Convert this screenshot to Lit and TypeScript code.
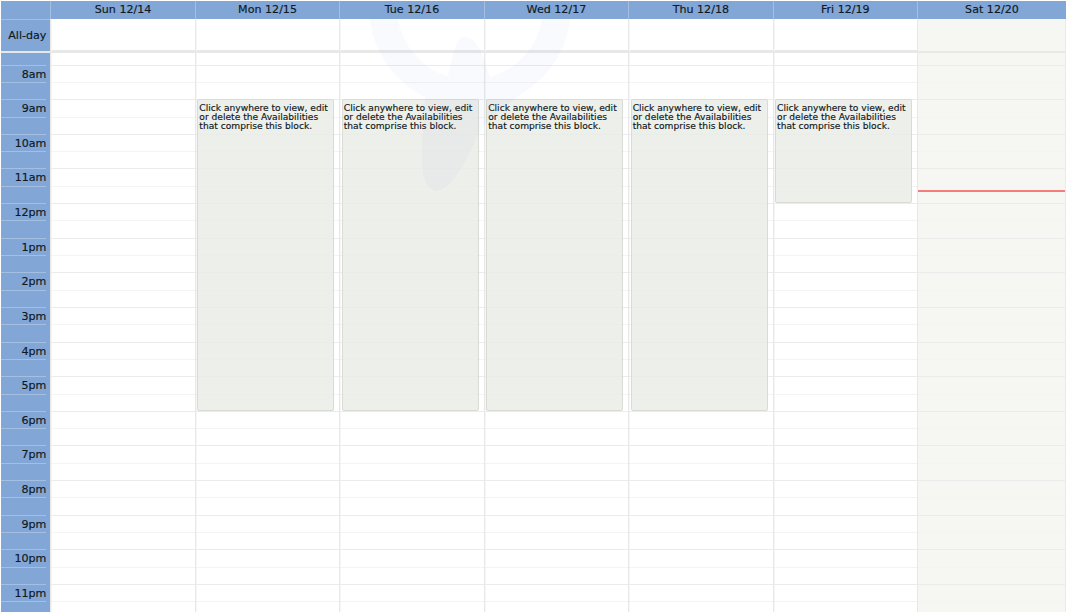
import { LitElement, html, css } from "lit";
import { customElement } from "lit/decorators.js";

const DAYS = ["Sun 12/14", "Mon 12/15", "Tue 12/16", "Wed 12/17", "Thu 12/18", "Fri 12/19", "Sat 12/20"];
const HOURS = ["8am", "9am", "10am", "11am", "12pm", "1pm", "2pm", "3pm", "4pm", "5pm", "6pm", "7pm", "8pm", "9pm", "10pm", "11pm"];
const EVENT_TEXT = "Click anywhere to view, edit or delete the Availabilities that comprise this block.";
const HOUR = 34.63;

@customElement("app-root")
export class AppRoot extends LitElement {
  static styles = css`
    :host { display: block; width: 1072px; height: 612px; overflow: hidden; background: #fff; font-family: "DejaVu Sans", Verdana, sans-serif; color: #101820; position: relative; }
    .cal { width: 1065px; margin-left: 1px; padding-top: 1px; position: relative; -webkit-text-stroke: 0.15px currentColor; }
    .cols { display: grid; grid-template-columns: 49.4px repeat(6, 144.45px) 148.9px; }
    .head { height: 18px; background: #82a6d6; border-left: 1px solid #a4bfe2; box-sizing: border-box; font-size: 11.1px; line-height: 18px; text-align: center; color: #101820; }
    .head.first { border-left: 0; }
    .allday { height: 31px; }
    .gut { background: #82a6d6; font-size: 11.1px; text-align: right; padding-right: 4px; box-sizing: border-box; color: #101820; }
    .gut.ad { line-height: 31px; border-top: 1px solid #a4bfe2; }
    .cell { border-left: 1px solid #e8e8e8; box-shadow: inset 1px 0 0 #f6f6f6; box-sizing: border-box; }
    .cell.sat { background: #f6f7f3; border-right: 1px solid #ebebeb; box-shadow: none; }
    .divider { height: 3px; background: #e8e8e8; }
    .tcol { position: relative; }
    .slot { height: 17.315px; box-sizing: border-box; border-top: 1px dotted #f0f0f0; }
    .slot.hour { border-top: 1px solid #ebebeb; box-shadow: 0 1px 0 #f8f8f8; }
    .gut .slot { border-top: 1px solid #a4bfe2; box-shadow: none; }
    .gut .slot.hour { line-height: 17px; box-shadow: none; }
    .slot.lead { height: 11.6px; border-top: 0; }
    .wm { position: absolute; left: 0; top: 18px; width: 1065px; height: 200px; pointer-events: none; }
    .ev { position: absolute; top: 46px; left: 1.5px; width: 137px; box-sizing: border-box; background: rgba(233, 236, 230, 0.85); border: 1px solid #d8dcd5; border-radius: 2px; font-size: 9.12px; line-height: 9px; padding: 3.5px 1px 0 1px; color: #101820; overflow: hidden; }
    .now { position: absolute; left: 0; right: 0; top: 137px; height: 2px; background: #f47c7c; }
  `;

  private slots() {
    return html`<div class="slot lead"></div>${HOURS.flatMap(() => [html`<div class="slot hour"></div>`, html`<div class="slot"></div>`])}`;
  }

  render() {
    return html`<div class="cal">
      <div class="cols">
        <div class="head first"></div>
        ${DAYS.map((d) => html`<div class="head">${d}</div>`)}
      </div>
      <div class="cols allday">
        <div class="gut ad">All-day</div>
        ${DAYS.map((_, i) => html`<div class="cell ${i === 6 ? "sat" : ""}"></div>`)}
      </div>
      <div class="divider"></div>
      <div class="cols">
        <div class="gut">
          <div class="slot lead"></div>
          ${HOURS.flatMap((h) => [html`<div class="slot hour">${h}</div>`, html`<div class="slot"></div>`])}
        </div>
        ${DAYS.map((_, i) => html`<div class="cell tcol ${i === 6 ? "sat" : ""}">
          ${this.slots()}
          ${i >= 1 && i <= 5 ? html`<div class="ev" style="height:${(i === 5 ? 3 : 9) * HOUR + 0.5}px">${EVENT_TEXT}</div>` : ""}
          ${i === 6 ? html`<div class="now"></div>` : ""}
        </div>`)}
      </div>
      <svg class="wm" viewBox="1 19 1065 200">
        <path fill="#8aa6d0" fill-opacity=".05" d="M369.6 19 A101 101 0 0 0 425 98.4 C424 125 420 155 423 173 C425 186 431 192 437 192 C452 190 468 160 478 135 C488 118 505 108 520 95.8 A101 101 0 0 0 570.4 19 L542.2 19 A73 73 0 0 1 490 78.2 C484 60 478 38 465 38 C455 38 452 60 448 77.6 A73 73 0 0 1 397.8 19 Z" />
      </svg>
    </div>`;
  }
}
